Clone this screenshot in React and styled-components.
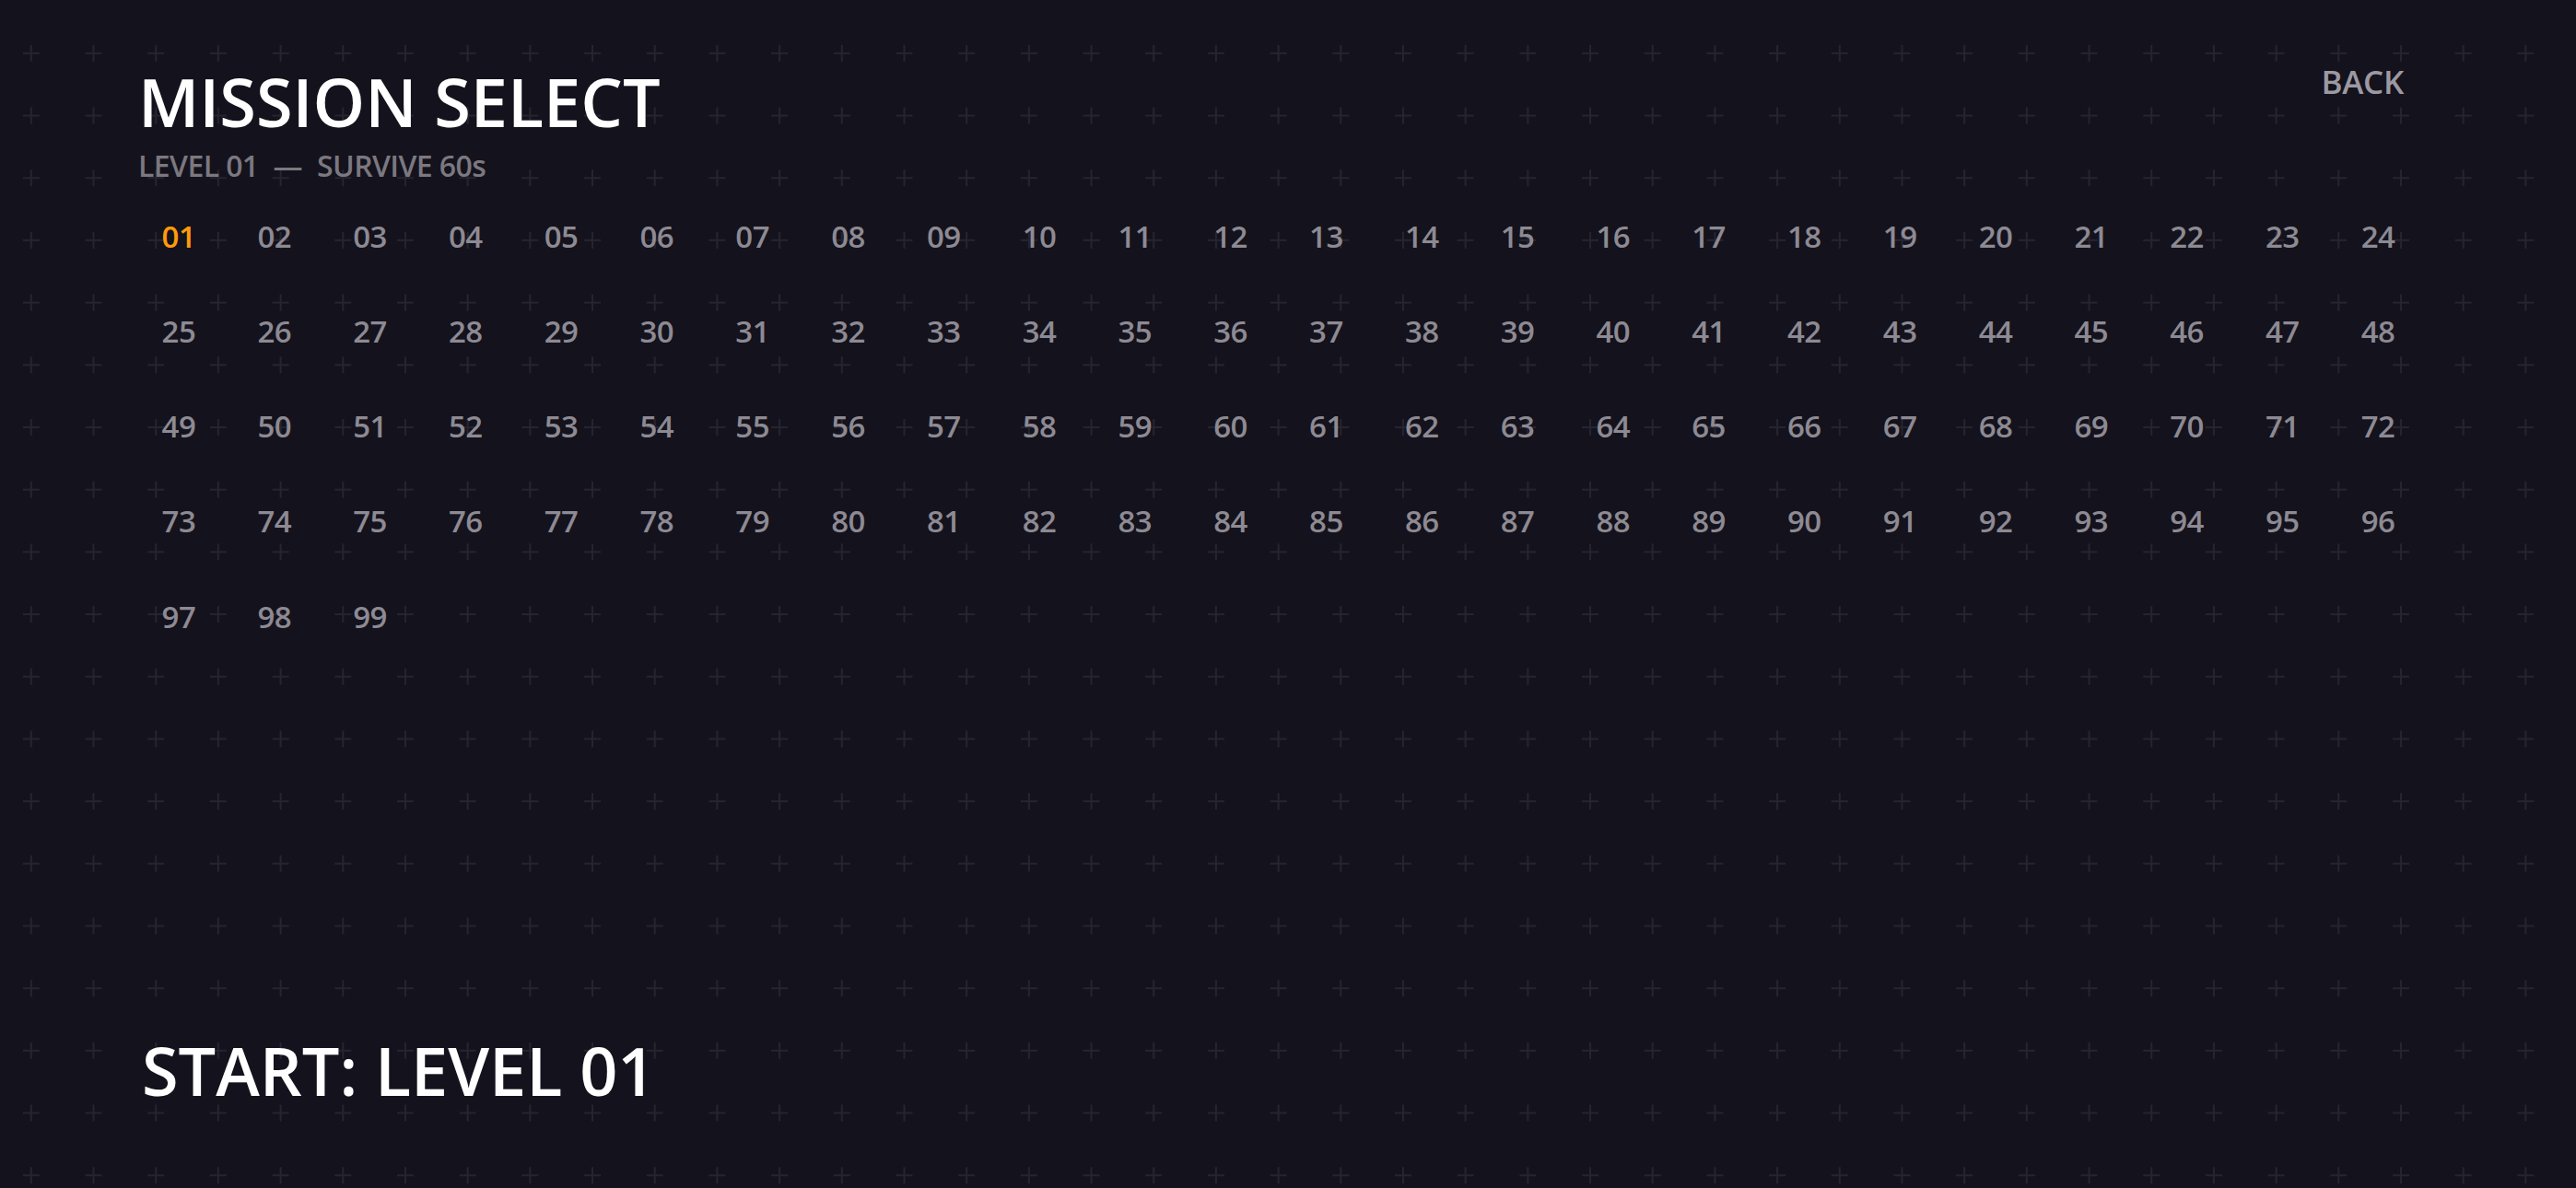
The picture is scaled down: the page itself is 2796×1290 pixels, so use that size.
import React, { useState } from "react";
import styled, { createGlobalStyle } from "styled-components";

const BG = "#14121c";
const MARK = "#26242f";
const TILE = "67.7px";

const GlobalStyle = createGlobalStyle`
  html, body {
    margin: 0;
    padding: 0;
    background: ${BG};
  }
  * { box-sizing: border-box; }
`;

// crosses made from four gradient layers: bands of background hide the line parts outside the arms
const Page = styled.div`
  width: 2796px;
  height: 1290px;
  overflow: hidden;
  display: flex;
  flex-direction: column;
  padding: 74px 171px 92px 150px;
  font-family: "Open Sans", "Noto Sans", sans-serif;
  background-color: ${BG};
  background-image:
    linear-gradient(to bottom, ${BG} calc(50% - 9px), transparent calc(50% - 9px), transparent calc(50% + 9px), ${BG} calc(50% + 9px)),
    linear-gradient(to right, transparent calc(50% - 0.5px), ${MARK} calc(50% - 0.5px), ${MARK} calc(50% + 0.5px), transparent calc(50% + 0.5px)),
    linear-gradient(to right, ${BG} calc(50% - 9px), transparent calc(50% - 9px), transparent calc(50% + 9px), ${BG} calc(50% + 9px)),
    linear-gradient(to bottom, transparent calc(50% - 0.5px), ${MARK} calc(50% - 0.5px), ${MARK} calc(50% + 0.5px), transparent calc(50% + 0.5px));
  background-size: ${TILE} ${TILE};
  background-position: 0 24px;
`;

const Header = styled.header`
  display: flex;
  justify-content: space-between;
  align-items: flex-start;
`;

const TitleBlock = styled.div`
  display: flex;
  flex-direction: column;
`;

const Title = styled.h1`
  margin: 0;
  font-size: 72px;
  line-height: 1;
  font-weight: 600;
  color: #ffffff;
  letter-spacing: 0;
`;

const Subtitle = styled.div`
  margin-top: 18px;
  font-size: 32px;
  line-height: 1;
  font-weight: 600;
  letter-spacing: -0.6px;
  color: #7b7880;
  display: flex;
  gap: 16px;
`;

const BackButton = styled.button`
  background: none;
  border: none;
  padding: 0 16px;
  margin-top: -3px;
  font-family: inherit;
  font-size: 35px;
  line-height: 1;
  font-weight: 600;
  letter-spacing: -0.3px;
  color: #9c99a2;
  cursor: pointer;
`;

const LevelGrid = styled.div`
  margin-top: 16px;
  display: grid;
  grid-template-columns: repeat(24, 1fr);
  grid-auto-rows: 88px;
  column-gap: 16px;
  row-gap: 15.3px;
`;

const LevelCell = styled.button`
  background: none;
  border: none;
  padding: 0;
  display: flex;
  align-items: center;
  justify-content: center;
  font-family: inherit;
  font-size: 33px;
  line-height: 1;
  font-weight: 600;
  letter-spacing: -0.6px;
  color: ${(p) => (p.$active ? "#ff9a0c" : "#8d8a93")};
  cursor: pointer;
`;

const Spacer = styled.div`
  flex: 1;
`;

const StartButton = styled.button`
  align-self: flex-start;
  background: none;
  border: none;
  padding: 0 0 0 4px;
  font-family: inherit;
  font-size: 72px;
  line-height: 1;
  font-weight: 600;
  color: #ffffff;
  cursor: pointer;
`;

const pad = (n) => String(n).padStart(2, "0");

export default function App() {
  const [level, setLevel] = useState(1);
  const levels = Array.from({ length: 99 }, (_, i) => i + 1);

  return (
    <>
      <GlobalStyle />
      <Page>
        <Header>
          <TitleBlock>
            <Title>MISSION SELECT</Title>
            <Subtitle>
              <span>LEVEL {pad(level)}</span>
              <span>—</span>
              <span>SURVIVE 60s</span>
            </Subtitle>
          </TitleBlock>
          <BackButton>BACK</BackButton>
        </Header>

        <LevelGrid>
          {levels.map((n) => (
            <LevelCell key={n} $active={n === level} onClick={() => setLevel(n)}>
              {pad(n)}
            </LevelCell>
          ))}
        </LevelGrid>

        <Spacer />
        <StartButton>START: LEVEL {pad(level)}</StartButton>
      </Page>
    </>
  );
}
